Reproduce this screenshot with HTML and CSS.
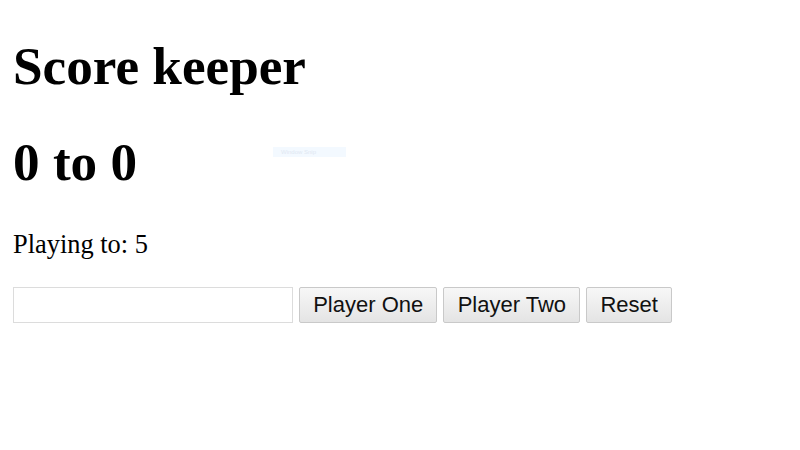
FILE: index.html
```html
<!DOCTYPE html>
<html>
<head>
<meta charset="utf-8">
<title>Score keeper</title>
<link rel="stylesheet" href="styles.css">
</head>
<body>
<h1 class="title">Score keeper</h1>
<h1 class="score">0 to 0</h1>
<p class="target">Playing to: 5</p>
<div class="controls">
  <input class="goal" type="number">
  <button class="btn">Player One</button>
  <button class="btn">Player Two</button>
  <button class="btn">Reset</button>
</div>
<div class="snip">Window Snip</div>
</body>
</html>
```
FILE: styles.css
```css
html, body {
  background: #fff;
}
body {
  margin: 0 13px 13px;
  padding-top: 1px;
  font-family: "Liberation Serif", "Times New Roman", serif;
  color: #000;
}
.title, .score {
  font-size: 53.2px;
  font-weight: bold;
  margin: 35px 0;
  line-height: 61px;
}
.target {
  font-size: 26.4px;
  margin: 36px 0 26px;
  line-height: 30px;
}
.controls {
  display: flex;
  gap: 6px;
  align-items: stretch;
  margin-top: 28px;
}
.goal {
  box-sizing: border-box;
  width: 280px;
  height: 36px;
  margin: 0;
  border: 1px solid #dcdcdc;
  background: #fff;
  padding: 2px 4px;
  font-size: 22px;
}
.btn {
  box-sizing: border-box;
  height: 36px;
  margin: 0;
  padding: 0 13.2px;
  font-family: "Liberation Sans", Arial, sans-serif;
  font-size: 22px;
  color: #111;
  background: linear-gradient(#f7f7f7, #e4e4e4);
  border: 1px solid #c9c9c9;
  border-radius: 2px;
}
.snip {
  position: absolute;
  left: 273px;
  top: 147px;
  width: 73px;
  height: 10px;
  background: #f3f9ff;
  color: #e0e8f2;
  font-family: "Liberation Sans", Arial, sans-serif;
  font-size: 6px;
  line-height: 10px;
  padding-left: 8px;
  box-sizing: border-box;
}
```
